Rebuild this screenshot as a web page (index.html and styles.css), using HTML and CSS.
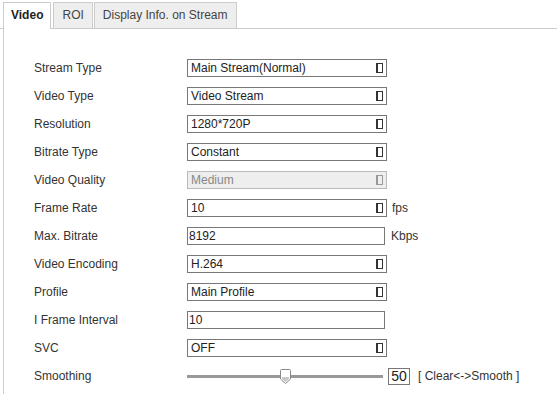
FILE: index.html
```html
<!DOCTYPE html>
<html>
<head>
<meta charset="utf-8">
<link rel="stylesheet" href="styles.css">
</head>
<body>
<div class="tabs">
  <div class="tab active">Video</div>
  <div class="tab">ROI</div>
  <div class="tab">Display Info. on Stream</div>
</div>
<div class="panel">
  <div class="row"><span class="label">Stream Type</span><div class="select"><span>Main Stream(Normal)</span><i class="arrow"></i></div></div>
  <div class="row"><span class="label">Video Type</span><div class="select"><span>Video Stream</span><i class="arrow"></i></div></div>
  <div class="row"><span class="label">Resolution</span><div class="select"><span>1280*720P</span><i class="arrow"></i></div></div>
  <div class="row"><span class="label">Bitrate Type</span><div class="select"><span>Constant</span><i class="arrow"></i></div></div>
  <div class="row"><span class="label">Video Quality</span><div class="select disabled"><span>Medium</span><i class="arrow"></i></div></div>
  <div class="row"><span class="label">Frame Rate</span><div class="select"><span>10</span><i class="arrow"></i></div><span class="unit">fps</span></div>
  <div class="row"><span class="label">Max. Bitrate</span><div class="input">8192</div><span class="unit u2">Kbps</span></div>
  <div class="row"><span class="label">Video Encoding</span><div class="select"><span>H.264</span><i class="arrow"></i></div></div>
  <div class="row"><span class="label">Profile</span><div class="select"><span>Main Profile</span><i class="arrow"></i></div></div>
  <div class="row"><span class="label">I Frame Interval</span><div class="input">10</div></div>
  <div class="row"><span class="label">SVC</span><div class="select"><span>OFF</span><i class="arrow"></i></div></div>
  <div class="row"><span class="label">Smoothing</span>
    <div class="slider">
      <div class="track"></div>
      <svg class="thumb" width="11" height="15" viewBox="0 0 11 15"><path d="M1.5 0.5 H9.5 Q10.5 0.5 10.5 1.5 V10 L5.5 14.5 L0.5 10 V1.5 Q0.5 0.5 1.5 0.5 Z" fill="#fff" stroke="#888"/><path d="M2 8 H9 V10 L5.5 13 L2 10 Z" fill="#c8c8c8"/></svg>
    </div>
    <div class="value">50</div><span class="hint">[ Clear&lt;-&gt;Smooth ]</span>
  </div>
</div>
</body>
</html>
```

FILE: styles.css
```css
html, body {
  margin: 0;
  padding: 0;
  background: #fff;
}
body {
  font-family: "Liberation Sans", Arial, sans-serif;
  font-size: 12px;
  color: #333;
  width: 557px;
  height: 394px;
  overflow: hidden;
}
.tabs {
  display: flex;
  padding: 2px 0 0 3px;
  border-bottom: 1px solid #ccc;
  height: 26px;
}
.tab {
  height: 25px;
  line-height: 25px;
  border: 1px solid #ccc;
  border-bottom: none;
  background: #eee;
  padding: 0 8px;
  margin-right: 1px;
  color: #444;
}
.tab.active {
  background: #fff;
  font-weight: bold;
  color: #222;
  height: 26px;
  margin-bottom: -1px;
  margin-right: 2px;
  padding: 0 7px;
}
.panel {
  box-sizing: border-box;
  margin-left: 3px;
  border-left: 1px solid #ccc;
  padding: 25px 0 0 30px;
  height: 365px;
}
.row {
  display: flex;
  align-items: center;
  height: 28px;
}
.label {
  width: 153px;
  flex: none;
}
.select {
  box-sizing: border-box;
  width: 200px;
  height: 18px;
  border: 1px solid #777;
  display: flex;
  align-items: center;
  justify-content: space-between;
  padding: 0 3px 0 3px;
  color: #222;
}
.select.disabled {
  background: #eee;
  border-color: #bbb;
  color: #888;
}
.arrow {
  display: block;
  width: 4px;
  height: 8px;
  border: 1px solid #333;
  border-left-width: 2px;
  margin-right: 0;
}
.select.disabled .arrow {
  border-color: #999;
}
.input {
  box-sizing: border-box;
  width: 198px;
  height: 18px;
  border: 1px solid #777;
  padding: 0 1px;
  line-height: 16px;
  color: #222;
}
.unit {
  margin-left: 5px;
}
.unit.u2 {
  margin-left: 6px;
}
.slider {
  position: relative;
  width: 196px;
  height: 16px;
  display: flex;
  align-items: center;
}
.track {
  width: 196px;
  height: 3px;
  background: #999;
}
.thumb {
  position: absolute;
  left: 93px;
  top: 1px;
}
.value {
  box-sizing: border-box;
  width: 22px;
  height: 17px;
  border: 1px solid #777;
  margin-left: 5px;
  text-align: center;
  font-size: 14px;
  line-height: 15px;
  color: #222;
}
.hint {
  margin-left: 8px;
}
```
